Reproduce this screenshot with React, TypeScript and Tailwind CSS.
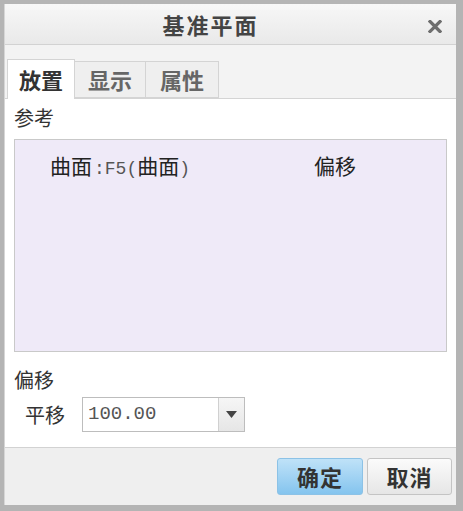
export default function App() {
  const mono = { fontFamily: '"Liberation Mono","Noto Sans CJK SC",monospace' };
  return (
    <div
      className="w-[463px] h-[511px] bg-[#b4b4b4] pt-[4px] pl-[4px] pr-[7px] pb-[6px] text-[#2a2a2a]"
      style={{ fontFamily: '"Noto Sans CJK SC", sans-serif' }}
    >
      <div className="flex flex-col h-full bg-[#f2f2f2] border-l border-[#d6d6d6]">
        {/* title bar */}
        <div className="relative h-[41px] flex items-center justify-center pr-[40px] bg-gradient-to-b from-[#f7f7f7] to-[#e9e9e9] border-b border-[#d2d2d2]">
          <span className="text-[22px] font-bold text-[#444] tracking-[2px]">基准平面</span>
          <svg className="absolute right-[14px] top-[16px]" width="14" height="13" viewBox="0 0 14 13">
            <path d="M2 1.5L12 11.5M12 1.5L2 11.5" stroke="#6e6e6e" strokeWidth="3.2" strokeLinecap="square" />
          </svg>
        </div>

        {/* tabs */}
        <div className="flex items-end h-[53px] pl-[2px] bg-[#f3f3f3]">
          <div className="w-[68px] h-[40px] bg-white border border-b-0 border-[#d4d4d4] flex items-center justify-center text-[22px] font-bold text-[#333] -mb-px z-10">
            放置
          </div>
          <div className="w-[71px] h-[37px] bg-[#efefef] border border-l-0 border-[#d4d4d4] flex items-center justify-center text-[22px] font-bold text-[#666]">
            显示
          </div>
          <div className="w-[73px] h-[37px] bg-[#efefef] border border-l-0 border-[#d4d4d4] flex items-center justify-center text-[22px] font-bold text-[#666]">
            属性
          </div>
        </div>

        {/* content panel */}
        <div className="flex-1 bg-white border-t border-[#d4d4d4] px-[9px] pt-[6px] flex flex-col">
          <div className="text-[20px] leading-[26px] text-[#333]">参考</div>
          <div className="mt-[8px] h-[213px] bg-[#efeaf8] border border-[#c9c9c9] pt-[10px] flex text-[21px] text-[#222]">
            <div className="pl-[35px] w-[299px] flex items-baseline">
              曲面
              <span className="text-[18px] text-[#555] ml-[2px]" style={mono}>:F5(</span>
              曲面
              <span className="text-[18px] text-[#555]" style={mono}>)</span>
            </div>
            <div>偏移</div>
          </div>

          <div className="mt-[15px] text-[20px] leading-[26px] text-[#333]">偏移</div>
          <div className="mt-[4px] flex items-center pl-[11px]">
            <span className="text-[20px] text-[#333] mr-[17px]">平移</span>
            <div className="flex w-[163px] h-[35px] border border-[#bdbdbd] bg-white">
              <div className="flex-1 flex items-center pl-[5px] text-[19px] text-[#555]" style={mono}>
                100.00
              </div>
              <div className="w-[26px] border-l border-[#d0d0d0] bg-gradient-to-b from-[#f6f6f6] to-[#e6e6e6] flex items-center justify-center">
                <svg width="11" height="7" viewBox="0 0 11 7">
                  <path d="M0 0H11L5.5 7Z" fill="#444" />
                </svg>
              </div>
            </div>
          </div>
          <div className="flex-1" />
        </div>

        {/* footer */}
        <div className="h-[58px] border-t border-[#d2d2d2] bg-[#efefef] flex items-center justify-end gap-[4px] pr-[4px]">
          <button className="w-[86px] h-[37px] rounded-[3px] border border-[#8cc2e6] bg-gradient-to-b from-[#bfe2f8] to-[#84c4ee] text-[22px] font-bold text-[#333] tracking-[1px]">
            确定
          </button>
          <button className="w-[85px] h-[37px] rounded-[3px] border border-[#c4c4c4] bg-gradient-to-b from-[#fbfbfb] to-[#e6e6e6] text-[22px] font-bold text-[#333] tracking-[1px]">
            取消
          </button>
        </div>
      </div>
    </div>
  );
}
